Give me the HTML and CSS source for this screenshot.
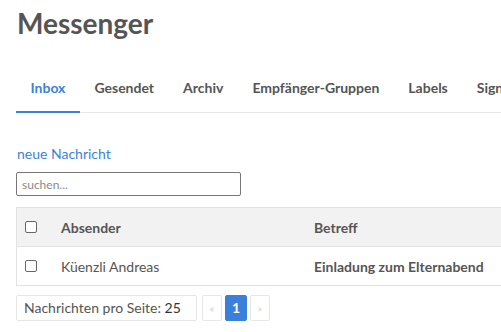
FILE: index.html
```html
<!DOCTYPE html>
<html lang="de">
<head>
    <meta charset="UTF-8">
    <meta name="viewport" content="width=device-width, initial-scale=1.0">
    <title>Messenger</title>
    <link rel="stylesheet" href="styles.css">
</head>
<body>
    <h1>Messenger</h1>

    <ul class="tabs">
        <li class="active"><a href="#">Inbox</a></li>
        <li><a href="#">Gesendet</a></li>
        <li><a href="#">Archiv</a></li>
        <li><a href="#">Empfänger-Gruppen</a></li>
        <li><a href="#">Labels</a></li>
        <li><a href="#">Signaturen</a></li>
    </ul>

    <div class="content">
        <a class="new-link" href="#">neue Nachricht</a>
        <input class="search" type="text" placeholder="suchen...">

        <table class="messages">
            <thead>
                <tr>
                    <th class="check"><span class="box"></span></th>
                    <th class="sender">Absender</th>
                    <th>Betreff</th>
                </tr>
            </thead>
            <tbody>
                <tr>
                    <td class="check"><span class="box"></span></td>
                    <td class="sender">Küenzli Andreas</td>
                    <td class="subject">Einladung zum Elternabend</td>
                </tr>
            </tbody>
        </table>

        <div class="pager">
            <div class="per-page">Nachrichten pro Seite: <b>25</b></div>
            <a class="page disabled" href="#">«</a>
            <a class="page current" href="#">1</a>
            <a class="page disabled" href="#">»</a>
        </div>
    </div>
</body>
</html>
```

FILE: styles.css
```css
body {
    font-family: Lato, 'Liberation Sans', sans-serif;
    color: #555;
    margin: 0;
    padding: 0 16px;
    overflow: hidden;
}
h1 {
    font-size: 28px;
    font-weight: 700;
    color: #555;
    margin: 5px 0 0 1px;
    line-height: 36px;
}
.tabs {
    display: flex;
    list-style: none;
    margin: 23px -16px 0 0;
    padding: 0;
    border-bottom: 1px solid #e8e8e8;
    white-space: nowrap;
}
.tabs li {
    margin-bottom: -1px;
}
.tabs a {
    display: block;
    padding: 15px 14.5px;
    font-size: 14px;
    font-weight: 700;
    color: #555;
    text-decoration: none;
    border-bottom: 2px solid transparent;
}
.tabs .active a {
    color: #3a84d8;
    border-bottom-color: #3a84d8;
}
.content {
    padding-top: 31px;
}
.new-link {
    display: block;
    font-size: 14px;
    color: #3a84d8;
    text-decoration: none;
    line-height: 20px;
    margin-left: 1px;
}
.search {
    display: block;
    box-sizing: border-box;
    width: 225px;
    height: 24px;
    margin-top: 8px;
    padding: 0 5px;
    border: 1px solid #777;
    border-radius: 2px;
    font-family: inherit;
    font-size: 12px;
}
.search::placeholder {
    color: #888;
}
.messages {
    margin-top: 11px;
    width: 560px;
    border-collapse: collapse;
    border: 1px solid #e2e2e2;
    font-size: 14px;
}
.messages th,
.messages td {
    text-align: left;
    height: 38px;
    padding: 0;
    border-bottom: 1px solid #e2e2e2;
}
.messages thead tr {
    background: #f2f2f2;
}
.messages th {
    font-weight: 700;
}
.messages .check {
    width: 36px;
    padding-left: 8px;
}
.messages .sender {
    width: 253px;
}
.messages .subject {
    font-weight: 700;
}
.box {
    display: block;
    width: 10px;
    height: 10px;
    border: 1px solid #666;
    border-radius: 2px;
    background: #fff;
}
.pager {
    display: flex;
    align-items: center;
    gap: 3px;
    margin-top: 9px;
    font-size: 14px;
}
.per-page {
    box-sizing: border-box;
    width: 181px;
    height: 26px;
    line-height: 24px;
    padding: 0 7px;
    border: 1px solid #e6e6e6;
    border-radius: 2px;
    margin-right: 2px;
}
.per-page b {
    font-weight: 400;
    color: #333;
}
.page {
    box-sizing: border-box;
    display: block;
    min-width: 20px;
    height: 26px;
    line-height: 24px;
    padding: 0 5px;
    border: 1px solid #e6e6e6;
    border-radius: 2px;
    text-align: center;
    text-decoration: none;
    font-size: 14px;
}
.page.disabled {
    color: #ccc;
    font-size: 10px;
}
.page.current {
    min-width: 22px;
    background: #3a7fd9;
    border-color: #3a7fd9;
    color: #fff;
    font-weight: 700;
}
```
